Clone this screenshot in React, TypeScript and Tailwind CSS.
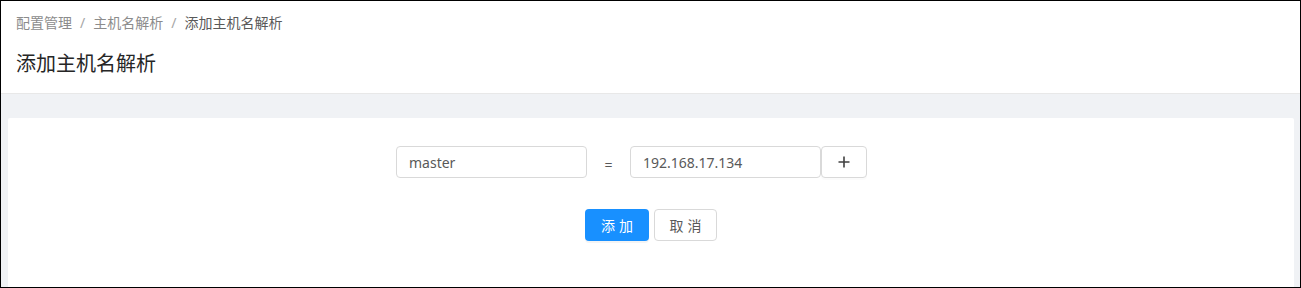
export default function App() {
  return (
    <div
      className="w-[1301px] h-[288px] border border-black bg-[#f0f2f5] overflow-hidden"
      style={{ fontFamily: '"Noto Sans", "Noto Sans CJK SC", sans-serif' }}
    >
      <div className="bg-white border-b border-[#e8e8e8] pl-[15px] pt-[11px] pb-[15px]">
        <div className="flex items-center text-[14px] leading-[22px] text-[#8c8c8c]">
          <span>配置管理</span>
          <span className="px-2 text-[#a6a6a6]">/</span>
          <span>主机名解析</span>
          <span className="px-2 text-[#a6a6a6]">/</span>
          <span className="text-[#595959]">添加主机名解析</span>
        </div>
        <div className="mt-4 text-[20px] leading-[28px] text-[#262626]">
          添加主机名解析
        </div>
      </div>

      <div className="pt-6 pl-[7px] pr-[6px]">
        <div className="bg-white rounded-[2px] h-[200px] pt-[28px]">
          <div className="flex items-center ml-[388px]">
            <input
              readOnly
              value="master"
              className="w-[191px] h-8 px-[12px] border border-[#d9d9d9] rounded-[4px] text-[14px] text-[#595959] outline-none"
            />
            <span className="w-[43px] text-center text-[14px] text-[#595959] mt-[5px]">=</span>
            <input
              readOnly
              value="192.168.17.134"
              className="w-[191px] h-8 px-[12px] border border-[#d9d9d9] rounded-[4px] text-[14px] text-[#595959] outline-none"
            />
            <button className="w-[46px] h-8 border border-[#d9d9d9] rounded-[4px] bg-white flex items-center justify-center shadow-[0_2px_0_rgba(0,0,0,0.015)]">
              <svg width="14" height="14" viewBox="0 0 14 14">
                <path d="M7 1.5v11M1.5 7h11" stroke="#404040" strokeWidth="1.6" />
              </svg>
            </button>
          </div>

          <div className="flex justify-center gap-[5px] mt-[31px]">
            <button className="w-16 h-8 rounded-[4px] bg-[#1890ff] text-white text-[14px] tracking-[4px] pl-[4px] shadow-[0_2px_0_rgba(0,0,0,0.045)]">
              添加
            </button>
            <button className="w-[63px] h-8 rounded-[4px] bg-white border border-[#d9d9d9] text-[#595959] text-[14px] tracking-[4px] pl-[4px]">
              取消
            </button>
          </div>
        </div>
      </div>
    </div>
  );
}
